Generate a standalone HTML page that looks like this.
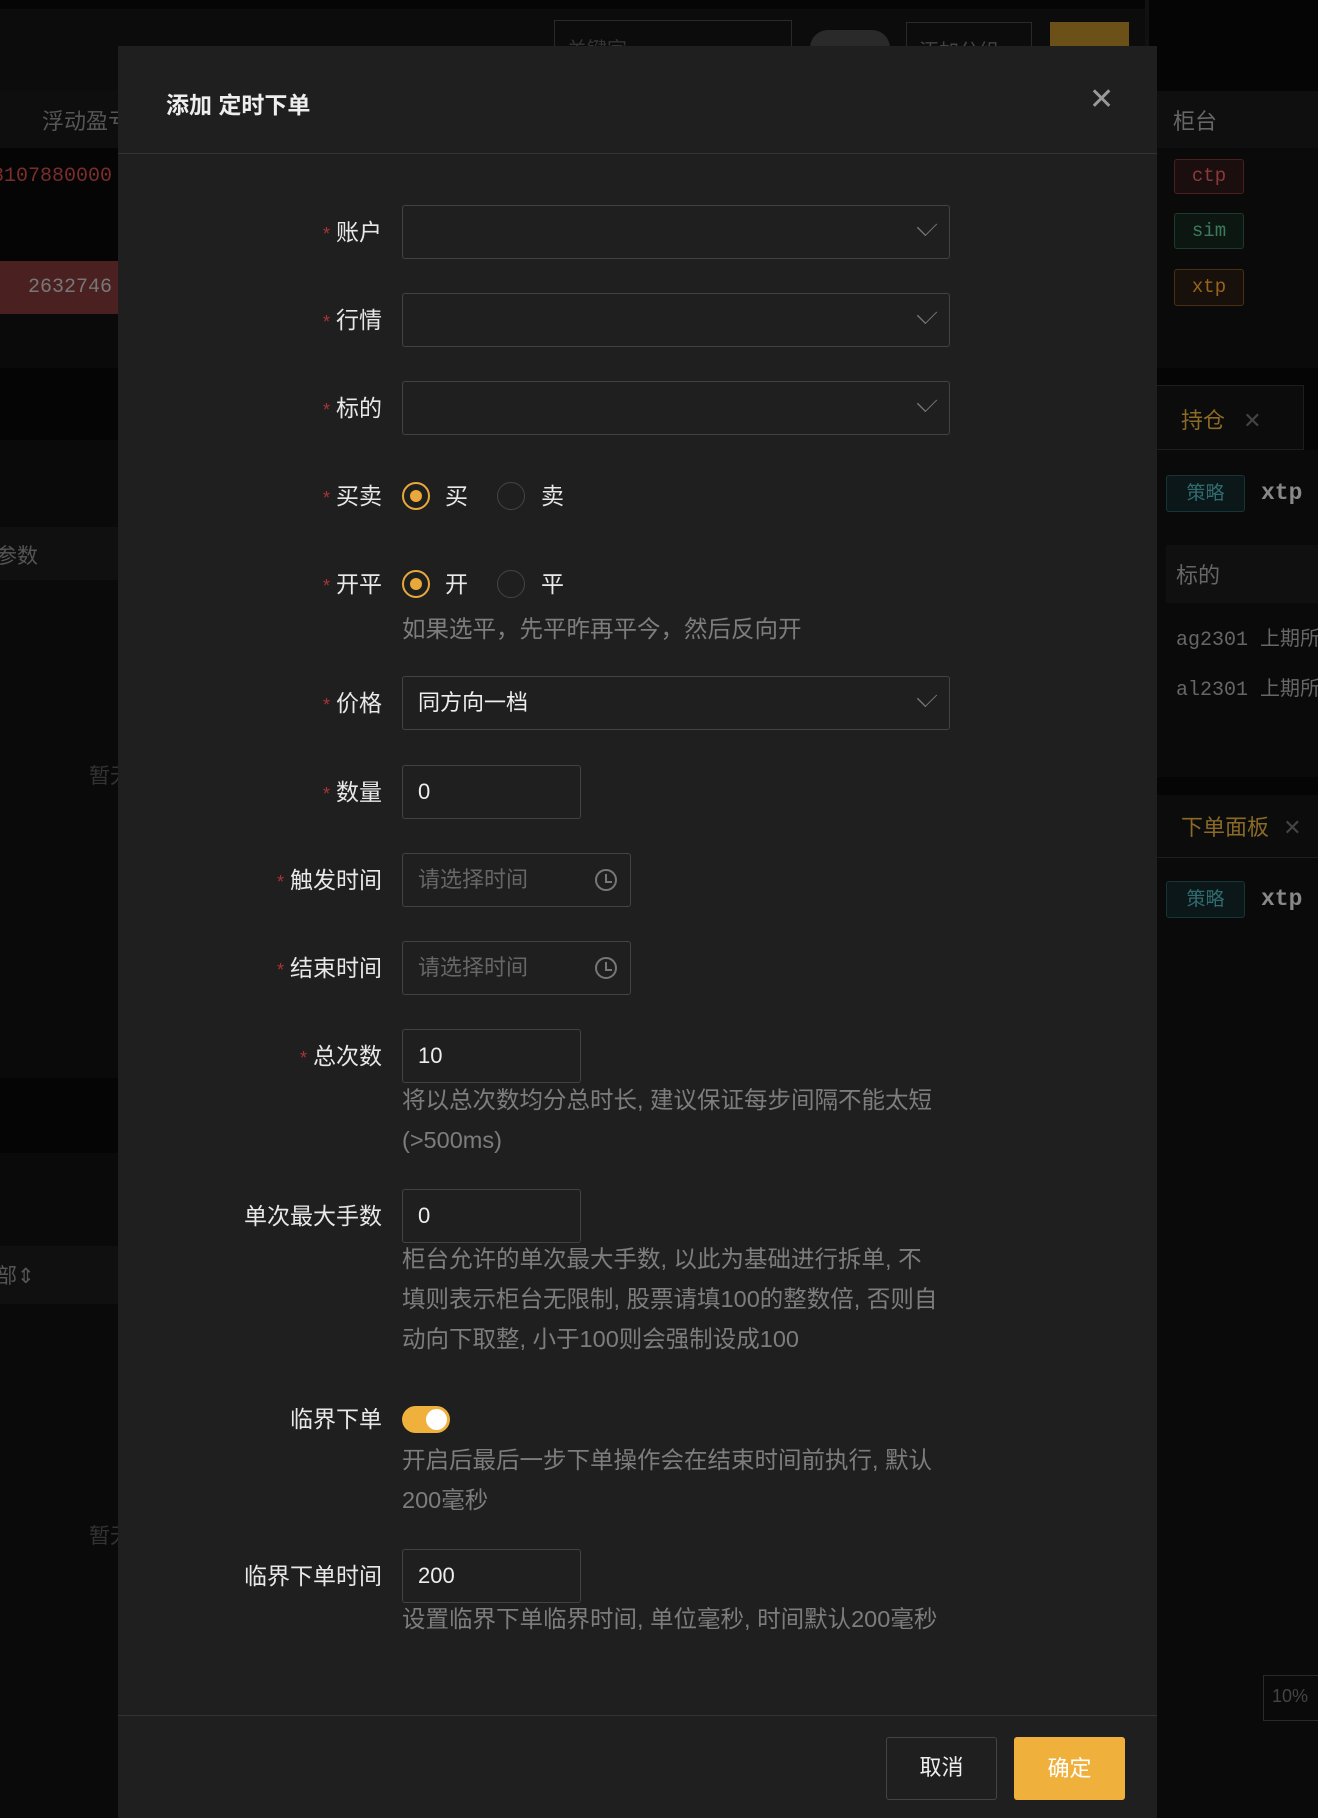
<!DOCTYPE html>
<html><head><meta charset="utf-8">
<style>
*{box-sizing:border-box;margin:0;padding:0}
body{width:1318px;height:1818px;background:#050505;position:relative;overflow:hidden;font-family:"Liberation Sans","Noto Sans CJK SC",sans-serif;color:#ddd}
.a{position:absolute}
.m{font-family:"Liberation Mono","DejaVu Sans Mono",monospace}
.lbl{position:absolute;right:936px;font-size:23px;color:#e8e8e8;line-height:30px;white-space:nowrap}
.lbl b{color:#a33;font-weight:normal;margin-right:6px;font-size:18px}
.inp{position:absolute;left:402px;border:1.5px solid #434343;border-radius:3px;height:54px;font-size:22px;line-height:51px;padding-left:15px;color:#eee}
.hint{position:absolute;left:402px;font-size:23.5px;color:#7d7d7d;line-height:40px;width:600px;white-space:nowrap}
.chev{position:absolute;right:16px;top:14px;width:12px;height:12px;border-right:1.5px solid #777;border-bottom:1.5px solid #777;transform:rotate(45deg) scale(1,1.4)}
.radio{position:absolute;width:28px;height:28px;border-radius:50%;border:1.5px solid #444}
.radio.on{border:2px solid #e9a93a}
.radio.on::after{content:"";position:absolute;left:6px;top:6px;width:12px;height:12px;border-radius:50%;background:#e9a93a}
.rt{position:absolute;font-size:23px;color:#e8e8e8;line-height:30px}
.tag{position:absolute;border:1px solid;border-radius:3px;font-size:19px;text-align:center}
.clk{position:absolute;right:13px;top:15px;width:22px;height:22px;border:2px solid #777;border-radius:50%}
.clk::after{content:"";position:absolute;left:8px;top:3px;width:5px;height:7px;border-left:2px solid #777;border-bottom:2px solid #777}
</style></head><body>
<!-- background -->
<div class="a" style="left:0;top:9px;width:1145px;height:82px;background:#0c0c0c"></div>
<div class="a" style="left:554px;top:20px;width:238px;height:50px;border:1px solid #2a2a2a;color:#333;font-size:20px;padding:12px">关键字</div>
<div class="a" style="left:810px;top:30px;width:80px;height:36px;border-radius:18px;background:#2a2a2a"></div>
<div class="a" style="left:906px;top:22px;width:126px;height:50px;border:1px solid #2a2a2a;color:#444;font-size:20px;padding:12px">添加分组</div>
<div class="a" style="left:1050px;top:22px;width:79px;height:50px;background:#6b5118"></div>
<div class="a" style="left:0;top:91px;width:1145px;height:57px;background:#0e0e0e"></div>
<div class="a" style="left:42px;top:104px;font-size:22px;color:#555">浮动盈亏</div>
<div class="a m" style="left:-8px;top:165px;font-size:20px;color:#7a2d2d">3107880000</div>
<div class="a" style="left:0;top:261px;width:130px;height:53px;background:#4a2020"></div>
<div class="a m" style="left:28px;top:276px;font-size:20px;color:#777">2632746</div>
<div class="a" style="left:0;top:314px;width:1145px;height:54px;background:#0a0a0a"></div>
<div class="a" style="left:0;top:440px;width:130px;height:638px;background:#0a0a0a"></div>
<div class="a" style="left:0;top:527px;width:130px;height:53px;background:#101010"></div>
<div class="a" style="left:-4px;top:540px;font-size:21px;color:#555">参数</div>
<div class="a" style="left:89px;top:760px;font-size:21px;color:#333">暂无</div>
<div class="a" style="left:0;top:1153px;width:130px;height:665px;background:#0a0a0a"></div>
<div class="a" style="left:0;top:1246px;width:130px;height:58px;background:#101010"></div>
<div class="a" style="left:-4px;top:1260px;font-size:21px;color:#555">部⇕</div>
<div class="a" style="left:89px;top:1520px;font-size:21px;color:#333">暂无</div>
<!-- right column -->
<div class="a" style="left:1145px;top:0;width:4px;height:1818px;background:#111"></div>
<div class="a" style="left:1149px;top:91px;width:169px;height:57px;background:#0f0f0f"></div>
<div class="a" style="left:1173px;top:104px;font-size:22px;color:#666">柜台</div>
<div class="a" style="left:1149px;top:148px;width:169px;height:220px;background:#0a0a0a"></div>
<div class="tag m" style="left:1174px;top:159px;width:70px;height:35px;border-color:#4a1f1f;color:#8a3a3a;background:#1a0e0e;line-height:33px">ctp</div>
<div class="tag m" style="left:1174px;top:213px;width:70px;height:36px;border-color:#1d3a2e;color:#3c7a5c;background:#0c1712;line-height:34px">sim</div>
<div class="tag m" style="left:1174px;top:269px;width:70px;height:37px;border-color:#4a3010;color:#98631e;background:#18100a;line-height:35px">xtp</div>
<div class="a" style="left:1149px;top:385px;width:155px;height:65px;background:#0c0c0c;border:1px solid #1e1e1e"></div>
<div class="a" style="left:1181px;top:403px;font-size:22px;color:#8a6a25">持仓 <span style="color:#444;margin-left:12px">✕</span></div>
<div class="a" style="left:1149px;top:450px;width:169px;height:327px;background:#0a0a0a"></div>
<div class="tag" style="left:1166px;top:475px;width:79px;height:37px;border-color:#173538;color:#2f6c70;background:#0b1718;line-height:35px">策略</div>
<div class="a m" style="left:1261px;top:480px;font-size:23px;color:#888;font-weight:bold">xtp</div>
<div class="a" style="left:1166px;top:545px;width:152px;height:58px;background:#101010"></div>
<div class="a" style="left:1176px;top:558px;font-size:22px;color:#666">标的</div>
<div class="a m" style="left:1176px;top:622px;font-size:20px;color:#666;white-space:nowrap">ag2301 上期所</div>
<div class="a m" style="left:1176px;top:672px;font-size:20px;color:#666;white-space:nowrap">al2301 上期所</div>
<div class="a" style="left:1149px;top:795px;width:169px;height:63px;background:#0c0c0c;border-bottom:1px solid #1e1e1e"></div>
<div class="a" style="left:1181px;top:810px;font-size:22px;color:#8a6a25;white-space:nowrap">下单面板 <span style="color:#444;margin-left:8px">✕</span></div>
<div class="a" style="left:1149px;top:858px;width:169px;height:960px;background:#0a0a0a"></div>
<div class="tag" style="left:1166px;top:881px;width:79px;height:37px;border-color:#173538;color:#2f6c70;background:#0b1718;line-height:35px">策略</div>
<div class="a m" style="left:1261px;top:886px;font-size:23px;color:#888;font-weight:bold">xtp</div>
<div class="a" style="left:1263px;top:1675px;width:60px;height:46px;border:1px solid #2a2a2a;color:#444;font-size:18px;padding:10px 8px" >10%</div>

<!-- modal -->
<div class="a" style="left:118px;top:46px;width:1039px;height:1772px;background:#1f1f1f">
  <div class="a" style="left:48px;top:40px;font-size:23px;font-weight:bold;color:#eee">添加 定时下单</div>
  <div class="a" style="left:971px;top:36px;font-size:30px;color:#999;font-weight:300">✕</div>
  <div class="a" style="left:0;top:107px;width:1039px;height:1px;background:#333"></div>
</div>
<div class="lbl" style="top:217px"><b>*</b>账户</div>
<div class="inp" style="top:205px;width:548px"><span class="chev"></span></div>
<div class="lbl" style="top:305px"><b>*</b>行情</div>
<div class="inp" style="top:293px;width:548px"><span class="chev"></span></div>
<div class="lbl" style="top:393px"><b>*</b>标的</div>
<div class="inp" style="top:381px;width:548px"><span class="chev"></span></div>
<div class="lbl" style="top:481px"><b>*</b>买卖</div>
<div class="radio on" style="left:402px;top:482px"></div><div class="rt" style="left:445px;top:481px">买</div>
<div class="radio" style="left:497px;top:482px"></div><div class="rt" style="left:541px;top:481px">卖</div>
<div class="lbl" style="top:569px"><b>*</b>开平</div>
<div class="radio on" style="left:402px;top:570px"></div><div class="rt" style="left:445px;top:569px">开</div>
<div class="radio" style="left:497px;top:570px"></div><div class="rt" style="left:541px;top:569px">平</div>
<div class="hint" style="top:609px">如果选平，先平昨再平今，然后反向开</div>
<div class="lbl" style="top:688px"><b>*</b>价格</div>
<div class="inp" style="top:676px;width:548px">同方向一档<span class="chev"></span></div>
<div class="lbl" style="top:777px"><b>*</b>数量</div>
<div class="inp" style="top:765px;width:179px">0</div>
<div class="lbl" style="top:865px"><b>*</b>触发时间</div>
<div class="inp" style="top:853px;width:229px;color:#666">请选择时间<span class="clk"></span></div>
<div class="lbl" style="top:953px"><b>*</b>结束时间</div>
<div class="inp" style="top:941px;width:229px;color:#666">请选择时间<span class="clk"></span></div>
<div class="lbl" style="top:1041px"><b>*</b>总次数</div>
<div class="inp" style="top:1029px;width:179px">10</div>
<div class="hint" style="top:1080px">将以总次数均分总时长, 建议保证每步间隔不能太短<br>(&gt;500ms)</div>
<div class="lbl" style="top:1201px">单次最大手数</div>
<div class="inp" style="top:1189px;width:179px">0</div>
<div class="hint" style="top:1239px">柜台允许的单次最大手数, 以此为基础进行拆单, 不<br>填则表示柜台无限制, 股票请填100的整数倍, 否则自<br>动向下取整, 小于100则会强制设成100</div>
<div class="lbl" style="top:1404px">临界下单</div>
<div class="a" style="left:402px;top:1406px;width:48px;height:27px;border-radius:14px;background:#efb03c"><div class="a" style="left:24px;top:3px;width:21px;height:21px;border-radius:50%;background:#fff"></div></div>
<div class="hint" style="top:1440px">开启后最后一步下单操作会在结束时间前执行, 默认<br>200毫秒</div>
<div class="lbl" style="top:1561px">临界下单时间</div>
<div class="inp" style="top:1549px;width:179px">200</div>
<div class="hint" style="top:1599px">设置临界下单临界时间, 单位毫秒, 时间默认200毫秒</div>
<div class="a" style="left:118px;top:1715px;width:1039px;height:1px;background:#333"></div>
<div class="a" style="left:886px;top:1737px;width:111px;height:63px;border:1.5px solid #444;border-radius:3px;font-size:22px;text-align:center;line-height:60px;color:#eee">取消</div>
<div class="a" style="left:1014px;top:1737px;width:111px;height:63px;background:#f0b03c;border-radius:3px;font-size:22px;text-align:center;line-height:63px;color:#fff">确定</div>
</body></html>
